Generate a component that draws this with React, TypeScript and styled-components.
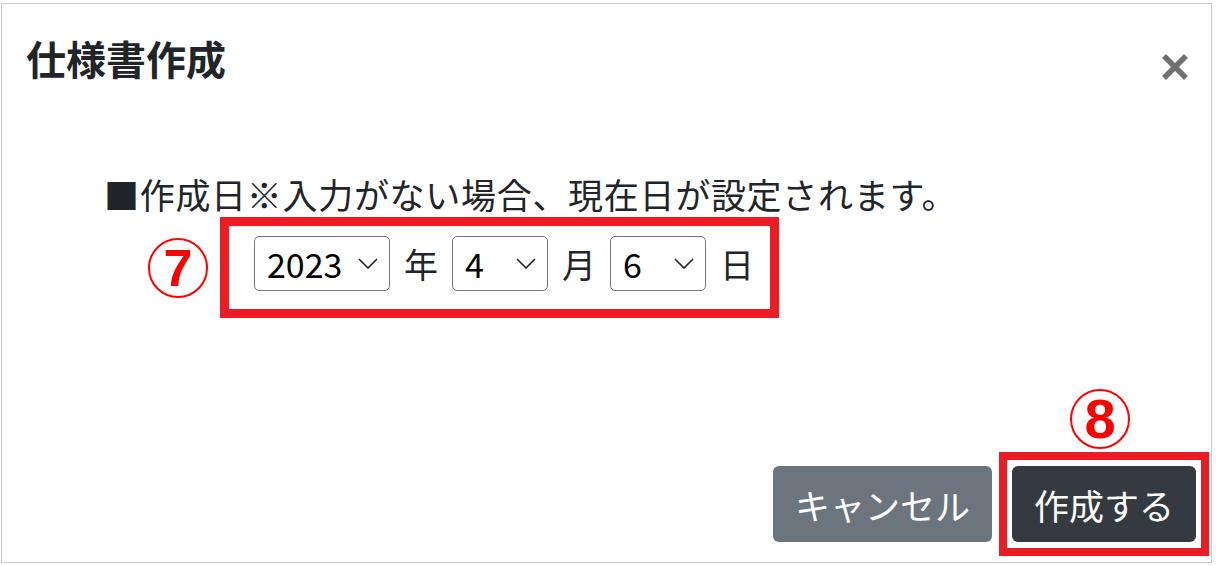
import styled, { createGlobalStyle } from "styled-components";

const GlobalStyle = createGlobalStyle`
  html, body {
    margin: 0;
    padding: 0;
    background: #ffffff;
  }
  body {
    font-family: "Noto Sans CJK JP", "Noto Sans", sans-serif;
    color: #212529;
  }
`;

const Modal = styled.div`
  box-sizing: border-box;
  width: 1211px;
  height: 560px;
  margin: 3px 0 0 1px;
  border: 1px solid #c8c8c8;
  display: flex;
  flex-direction: column;
`;

const Header = styled.div`
  display: flex;
  justify-content: space-between;
  align-items: flex-start;
  padding: 30px 22px 0 24px;
`;

const Title = styled.h1`
  margin: 0;
  font-size: 40px;
  line-height: 48px;
  font-weight: 700;
  color: #212529;
`;

const CloseButton = styled.button`
  margin-top: 19px;
  padding: 0;
  border: 0;
  background: none;
  width: 28px;
  height: 28px;
  color: #707070;
  cursor: pointer;

  svg {
    display: block;
  }
`;

const Body = styled.div`
  margin-top: 91px;
  padding-left: 102px;
`;

const Note = styled.p`
  margin: 0;
  font-size: 35px;
  line-height: 42px;
  letter-spacing: 0.7px;
  color: #212529;
`;

const DateRow = styled.div`
  display: flex;
  align-items: center;
  margin-top: 2px;
  margin-left: 44px;
`;

const Circled = styled.span<{ $size: number }>`
  box-sizing: border-box;
  width: 60px;
  height: 60px;
  border: 2px solid #ff0000;
  border-radius: 50%;
  display: flex;
  align-items: center;
  justify-content: center;
  color: #ff0000;
  font-family: "Liberation Sans", Arial, sans-serif;
  font-weight: 700;
  font-size: ${(p) => p.$size}px;
  line-height: 1;
`;

const Highlight = styled.div`
  border: 9px solid #ed1c24;
`;

const DateBox = styled(Highlight)`
  display: flex;
  align-items: center;
  margin-left: 12px;
  padding: 10px 2px 18px 25px;
`;

const SelectWrap = styled.div<{ $width: number }>`
  position: relative;
  width: ${(p) => p.$width}px;
  height: 55px;

  svg {
    position: absolute;
    right: 12px;
    top: 22px;
    pointer-events: none;
  }
`;

const Select = styled.select`
  appearance: none;
  box-sizing: border-box;
  width: 100%;
  height: 100%;
  border: 1px solid #767676;
  border-radius: 5px;
  background: #ffffff;
  padding: 0 0 0 12px;
  font-family: "Noto Sans CJK JP", "Noto Sans", sans-serif;
  font-size: 34px;
  color: #000000;
`;

const Unit = styled.span`
  margin: 0 14px;
  font-size: 34px;
  line-height: 42px;
  color: #212529;
`;

const Footer = styled.div`
  margin-top: auto;
  display: flex;
  justify-content: flex-end;
  align-items: flex-end;
  gap: 7px;
  padding: 0 2px 6px 0;
`;

const Button = styled.button<{ $variant: "secondary" | "dark" }>`
  height: 76px;
  padding: 0 22px;
  border: 0;
  border-radius: 6px;
  font-family: "Noto Sans CJK JP", "Noto Sans", sans-serif;
  font-size: 35px;
  color: #ffffff;
  background: ${(p) => (p.$variant === "dark" ? "#343a40" : "#6c757d")};
  cursor: pointer;
`;

const CancelButton = styled(Button)`
  margin-bottom: 14px;
`;

const Annotated = styled.div`
  display: flex;
  flex-direction: column;
  align-items: center;
  gap: 3px;

  ${Circled} {
    margin-right: 8px;
  }
`;

const ButtonBox = styled(Highlight)`
  border-width: 8px;
  padding: 6px 5px 6px 5px;
  display: flex;
`;

const Chevron = () => (
  <svg width="20" height="11" viewBox="0 0 20 11">
    <path d="M1 1 L10 10 L19 1" fill="none" stroke="#222" strokeWidth="1.6" />
  </svg>
);

const range = (from: number, to: number) =>
  Array.from({ length: to - from + 1 }, (_, i) => from + i);

export default function App() {
  return (
    <>
      <GlobalStyle />
      <Modal>
        <Header>
          <Title>仕様書作成</Title>
          <CloseButton aria-label="閉じる">
            <svg width="28" height="28" viewBox="0 0 28 28">
              <path
                d="M3 3 L25 25 M25 3 L3 25"
                stroke="currentColor"
                strokeWidth="5.5"
              />
            </svg>
          </CloseButton>
        </Header>
        <Body>
          <Note>■作成日※入力がない場合、現在日が設定されます。</Note>
          <DateRow>
            <Circled $size={52}>7</Circled>
            <DateBox>
              <SelectWrap $width={136}>
                <Select defaultValue="2023">
                  {range(2018, 2028).map((y) => (
                    <option key={y}>{y}</option>
                  ))}
                </Select>
                <Chevron />
              </SelectWrap>
              <Unit>年</Unit>
              <SelectWrap $width={96}>
                <Select defaultValue="4">
                  {range(1, 12).map((m) => (
                    <option key={m}>{m}</option>
                  ))}
                </Select>
                <Chevron />
              </SelectWrap>
              <Unit>月</Unit>
              <SelectWrap $width={96}>
                <Select defaultValue="6">
                  {range(1, 31).map((d) => (
                    <option key={d}>{d}</option>
                  ))}
                </Select>
                <Chevron />
              </SelectWrap>
              <Unit>日</Unit>
            </DateBox>
          </DateRow>
        </Body>
        <Footer>
          <CancelButton $variant="secondary">キャンセル</CancelButton>
          <Annotated>
            <Circled $size={56}>8</Circled>
            <ButtonBox>
              <Button $variant="dark">作成する</Button>
            </ButtonBox>
          </Annotated>
        </Footer>
      </Modal>
    </>
  );
}
